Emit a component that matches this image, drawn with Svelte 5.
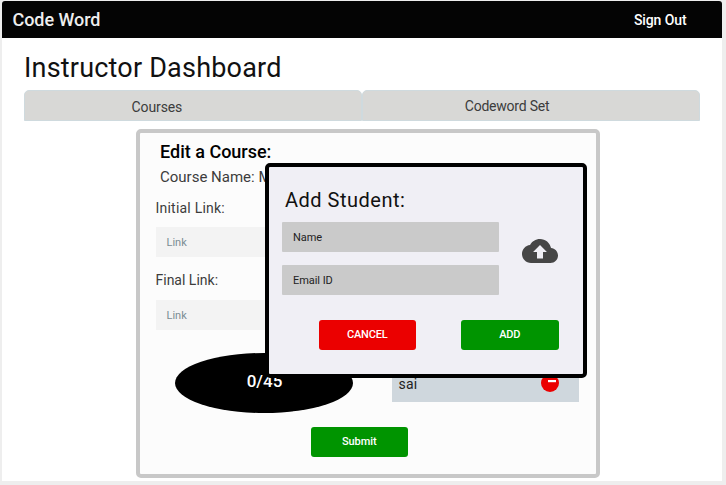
<script>
  let name = $state('');
  let email = $state('');
</script>

<div class="page">
  <nav>
    <span class="brand">Code Word</span>
    <span class="signout">Sign Out</span>
  </nav>

  <main>
    <h1>Instructor Dashboard</h1>
    <div class="tabs">
      <div class="tab courses">Courses</div>
      <div class="tab sets">Codeword Set</div>
    </div>

    <section class="card">
      <h2>Edit a Course:</h2>
      <p class="course">Course Name: M</p>
      <p class="label first">Initial Link:</p>
      <div class="link">Link</div>
      <p class="label second">Final Link:</p>
      <div class="link">Link</div>
      <div class="students">
        <div class="count">0/45</div>
        <div class="student">
          <span>sai</span>
          <svg width="18" height="18" viewBox="0 0 18 18">
            <circle cx="9" cy="9" r="9" fill="#eb0000" />
            <rect x="7" y="6" width="8" height="2.2" fill="#fff" />
          </svg>
        </div>
      </div>
      <button class="submit">Submit</button>
    </section>
  </main>

  <div class="modal" role="dialog" aria-label="Add Student">
    <h3>Add Student:</h3>
    <div class="row">
      <div class="fields">
        <input placeholder="Name" bind:value={name} />
        <input placeholder="Email ID" bind:value={email} />
      </div>
      <svg class="cloud" width="36" height="36" viewBox="0 0 24 24" fill="#464646">
        <path d="M19.35 10.04C18.67 6.59 15.64 4 12 4 9.11 4 6.6 5.64 5.35 8.04 2.34 8.36 0 10.91 0 14c0 3.31 2.69 6 6 6h13c2.76 0 5-2.24 5-5 0-2.64-2.05-4.78-4.65-4.96zM14 12.6v4.4h-4v-4.4H7.4L12 8l4.6 4.6z" />
      </svg>
    </div>
    <div class="actions">
      <button class="cancel">CANCEL</button>
      <button class="add">ADD</button>
    </div>
  </div>
</div>

<style>
  :global(body) { background: #eee; }
  * { box-sizing: border-box; }
  .page {
    position: relative;
    width: 726px;
    height: 485px;
    overflow: hidden;
    padding: 1px 4px 4px 2px;
    background: #eee;
    font-family: Roboto, sans-serif;
    color: #3c3c3c;
  }
  h1, h2, h3, p { margin: 0; font-weight: 400; white-space: nowrap; }
  nav {
    display: flex;
    justify-content: space-between;
    height: 37px;
    padding: 0 35.5px 0 10.5px;
    background: #040404;
    border-radius: 3px 3px 0 0;
    color: #fff;
    font-weight: 500;
  }
  .brand { font-size: 18px; line-height: 37px; color: #eee; letter-spacing: -0.05px; }
  .signout { font-size: 14px; line-height: 39px; letter-spacing: -0.1px; }
  main { height: 443px; padding: 13px 22px 0; background: #fff; }
  h1 { height: 39px; font-size: 27px; line-height: 35px; letter-spacing: 0.2px; color: #111; }
  .tabs { display: flex; width: 675.5px; }
  .tab {
    width: 338px;
    height: 31px;
    background: #d8d8d6;
    border: 1px solid #cfdade;
    border-radius: 5px 5px 0 0;
    font-size: 14px;
  }
  .courses { padding-left: 106.5px; line-height: 33px; letter-spacing: -0.1px; }
  .sets { padding-left: 102px; line-height: 30px; letter-spacing: -0.22px; }
  .card {
    width: 463.5px;
    height: 349px;
    margin: 8px 0 0 112px;
    padding: 9px 15px 0 15.5px;
    background: #fcfcfc;
    border: 4px solid #c8c8c8;
    border-radius: 5px;
  }
  h2 { padding-left: 4.5px; font-size: 18px; line-height: 20px; font-weight: 500; color: #000; }
  .course { padding-left: 4.5px; font-size: 15px; line-height: 30px; height: 29px; }
  .label { font-size: 14px; line-height: 16px; margin-top: 9px; margin-bottom: 11px; }
  .label.first { letter-spacing: 0.22px; }
  .label.second { margin-top: 15px; margin-bottom: 12px; }
  .link {
    height: 30px;
    padding-left: 11px;
    background: #f3f3f3;
    font-size: 11px;
    line-height: 31px;
    color: #7b8d93;
  }
  .students { display: flex; align-items: flex-start; margin: 23px 0 0 19px; }
  .count {
    width: 178px;
    height: 60px;
    padding-left: 2px;
    border-radius: 50%;
    background: #000;
    color: #fff;
    font-size: 17px;
    font-weight: 500;
    line-height: 56px;
    text-align: center;
  }
  .student {
    display: flex;
    justify-content: space-between;
    width: 187px;
    height: 37px;
    margin: 12px 0 0 39px;
    padding: 9px 20px 0 7px;
    background: #cfd7dd;
    font-size: 14px;
    line-height: 20px;
    letter-spacing: 0.2px;
    color: #222;
  }
  button {
    display: block;
    width: 97.5px;
    height: 30px;
    padding: 0;
    border: 0;
    border-radius: 3px;
    background: #009400;
    color: #fff;
    font: 500 11px/29px Roboto, sans-serif;
  }
  .submit { margin: 14px 0 0 155px; line-height: 28px; letter-spacing: -0.1px; }
  .modal {
    position: absolute;
    left: 265px;
    top: 163px;
    width: 322px;
    height: 214.5px;
    padding: 20px 12px 0 12.5px;
    border: 4px solid #000;
    border-radius: 5px;
    background: #f0eff5;
  }
  h3 { padding-left: 3.5px; font-size: 20px; line-height: 26px; letter-spacing: 0.5px; color: #111; }
  .row { display: flex; margin-top: 9px; }
  .fields { display: flex; flex-direction: column; gap: 13px; width: 217px; }
  input {
    display: block;
    width: 217px;
    height: 30px;
    padding: 1px 11.5px 0;
    border: 0;
    border-radius: 1px;
    background: #cacaca;
    font: 11px/29px Roboto, sans-serif;
    letter-spacing: -0.05px;
    color: #222;
  }
  input::placeholder { color: #222; opacity: 1; }
  .cloud { margin: 11px 0 0 23px; }
  .actions { display: flex; gap: 45px; margin: 25px 0 0 37px; }
  .actions button { letter-spacing: -0.15px; line-height: 28px; }
  .cancel { background: #eb0000; }
</style>
